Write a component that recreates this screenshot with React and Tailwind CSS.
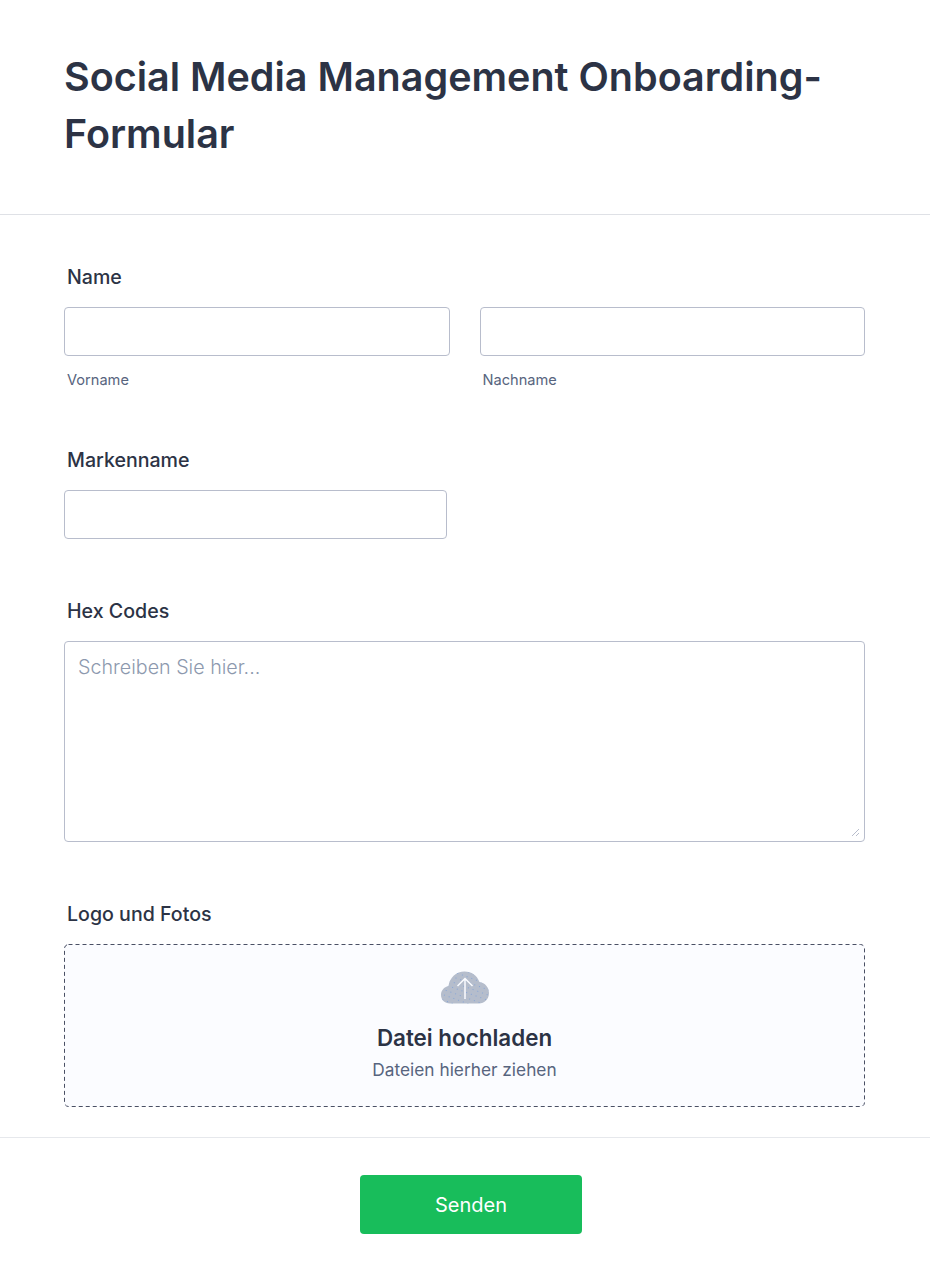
import React from 'react';

function CloudIcon() {
  return (
    <svg width="48" height="33" viewBox="0 0 48 33" fill="none">
      <defs>
        <pattern id="cloudDots" width="5" height="5" patternUnits="userSpaceOnUse" patternTransform="rotate(20)">
          <circle cx="1.5" cy="1.5" r="0.6" fill="#7FA0D8" />
        </pattern>
      </defs>
      <path d="M9 32.5C3.5 32.5 0 28.5 0 24C0 19.5 3 16 7.5 15C8.5 6.5 15.5 0.5 23.5 0.5C30.5 0.5 36 4.5 38.5 11C44 11.5 48 16.5 48 22C48 28 43.5 32.5 38 32.5Z" fill="#B5BDCC" />
      <path d="M9 32.5C3.5 32.5 0 28.5 0 24C0 19.5 3 16 7.5 15C8.5 6.5 15.5 0.5 23.5 0.5C30.5 0.5 36 4.5 38.5 11C44 11.5 48 16.5 48 22C48 28 43.5 32.5 38 32.5Z" fill="url(#cloudDots)" />
      <path d="M24 28V7.5M16.5 15L24 7.5L31.5 15" stroke="#FBFCFF" strokeWidth="1.5" fill="none" />
    </svg>
  );
}

function Label({ children }) {
  return <label className="block pl-[3px] text-[19.6px] leading-[22px] font-medium text-[#2C3345]">{children}</label>;
}

export default function App() {
  return (
    <div className="w-[930px] h-[1284px] bg-white font-['Inter','Noto_Sans',sans-serif] overflow-hidden">
      {/* header */}
      <div className="h-[215px] border-b border-[#DFE1E6] pl-[64px] pr-[64px] pt-[49px]">
        <h1 className="text-[39.5px] leading-[57px] font-semibold text-[#2C3345]">Social Media Management Onboarding-Formular</h1>
      </div>

      <div className="pl-[64px] pr-[65px]">
        {/* name */}
        <div className="pt-[51px]">
          <Label>Name</Label>
          <div className="mt-[19px] flex gap-[30px]">
            <div className="flex-1">
              <input className="block w-full h-[49px] rounded-[4px] border border-[#B8BDCC] bg-white" />
              <div className="mt-[15px] pl-[3px] text-[14.6px] leading-[18px] text-[#57647E]">Vorname</div>
            </div>
            <div className="flex-1">
              <input className="block w-full h-[49px] rounded-[4px] border border-[#B8BDCC] bg-white" />
              <div className="mt-[15px] pl-[3px] text-[14.6px] leading-[18px] text-[#57647E]">Nachname</div>
            </div>
          </div>
        </div>

        {/* marke */}
        <div className="pt-[60px]">
          <Label>Markenname</Label>
          <input className="mt-[19px] block w-[383px] h-[49px] rounded-[4px] border border-[#B8BDCC] bg-white" />
        </div>

        {/* hex */}
        <div className="pt-[61px]">
          <Label>Hex Codes</Label>
          <div className="relative mt-[19px]">
            <textarea
              className="block w-full h-[201px] resize-none rounded-[4px] border border-[#B8BDCC] bg-white px-[13px] py-[12px] text-[19.7px] leading-[26px] font-light text-[#2C3345] placeholder:text-[#8D99AE] outline-none"
              placeholder="Schreiben Sie hier..."
            />
            {/* resize handle */}
            <svg className="absolute right-[5px] bottom-[5px]" width="9" height="9" viewBox="0 0 9 9" fill="none">
              <path d="M1 8L8 1M5 8L8 5" stroke="#B8BDCC" strokeWidth="1" />
            </svg>
          </div>
        </div>

        {/* upload */}
        <div className="pt-[61px]">
          <Label>Logo und Fotos</Label>
          <div className="relative mt-[19px] h-[163px] rounded-[4px] bg-[#FBFCFF] flex flex-col items-center pt-[27px]">
            {/* dashed outline, css dashes come out too short */}
            <svg className="absolute inset-0 w-full h-full" fill="none">
              <rect x="0.5" y="0.5" width="800" height="162" rx="4" stroke="#4A5064" strokeWidth="1" strokeDasharray="4 3" />
            </svg>
            <CloudIcon />
            <div className="mt-[20px] text-[22.4px] leading-[28px] font-semibold text-[#2C3345]">Datei hochladen</div>
            <div className="mt-[7px] text-[17.3px] leading-[22px] text-[#57647E]">Dateien hierher ziehen</div>
          </div>
        </div>
      </div>

      {/* footer */}
      <div className="mt-[30px] border-t border-[#E6E8EC] flex justify-center pt-[37px] pl-[12px]">
        <button className="w-[222px] h-[59px] rounded-[4px] bg-[#18BD5B] text-white text-[20px] font-normal">Senden</button>
      </div>
    </div>
  );
}
